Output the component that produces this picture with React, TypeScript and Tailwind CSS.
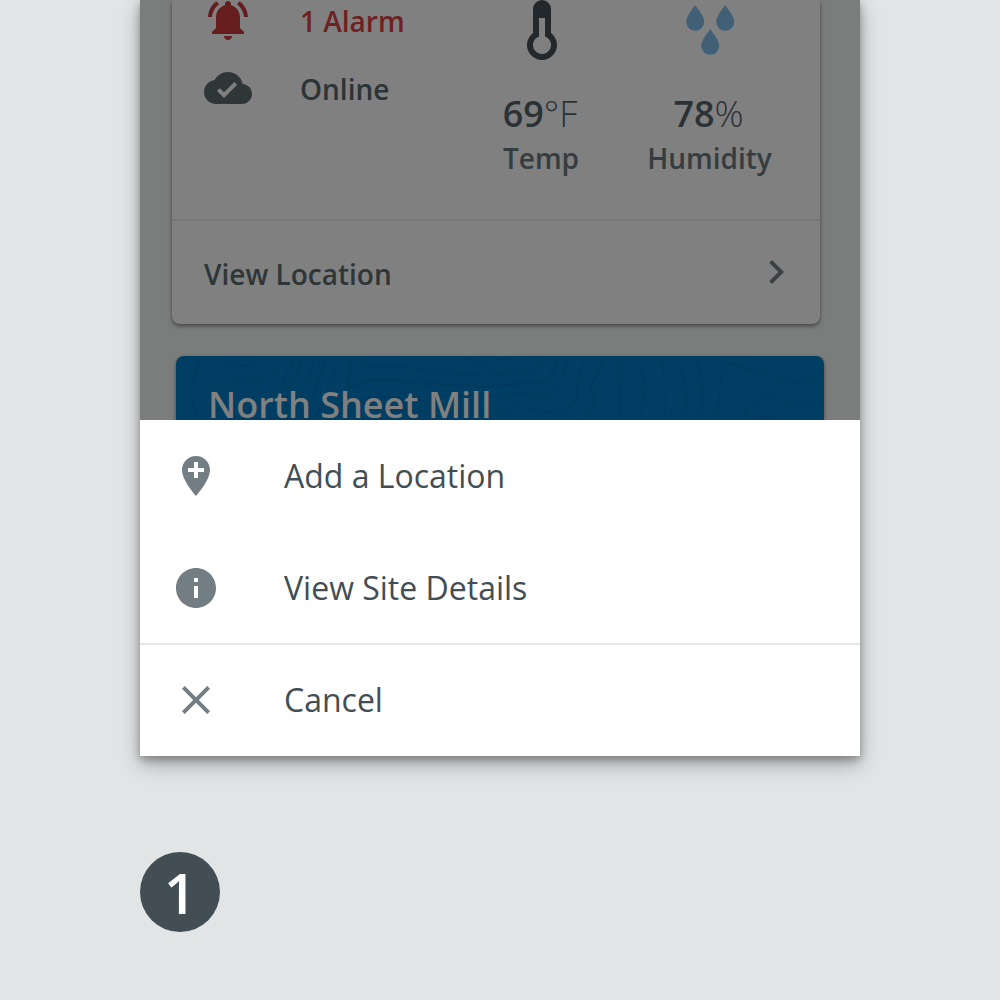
import type { ReactNode } from "react";

function Icon({ d, className }: { d: string; className: string }) {
  return (
    <svg viewBox="0 0 24 24" className={`size-12 shrink-0 ${className}`} fill="currentColor">
      <path d={d} />
    </svg>
  );
}

const PATHS = {
  alarm:
    "M7.58 4.08L6.15 2.65C3.75 4.48 2.17 7.3 2.03 10.5h2c.15-2.65 1.51-4.97 3.55-6.42zm12.39 6.42h2c-.15-3.2-1.73-6.02-4.12-7.85l-1.42 1.43c2.02 1.45 3.39 3.77 3.54 6.42zM18 11c0-3.07-1.64-5.64-4.5-6.32V4c0-.83-.67-1.5-1.5-1.5s-1.5.67-1.5 1.5v.68C7.63 5.36 6 7.92 6 11v5l-2 2v1h16v-1l-2-2v-5zm-6 11c.14 0 .27-.01.4-.04.65-.14 1.18-.58 1.44-1.18.1-.24.15-.5.15-.78h-4c.01 1.1.9 2 2.01 2z",
  cloud:
    "M19.35 10.04C18.67 6.59 15.64 4 12 4 9.11 4 6.6 5.64 5.35 8.04 2.34 8.36 0 10.91 0 14c0 3.31 2.69 6 6 6h13c2.76 0 5-2.24 5-5 0-2.64-2.05-4.78-4.65-4.96zM10 17l-3.5-3.5 1.41-1.41L10 14.17 15.18 9l1.41 1.41L10 17z",
  chevron: "M10 6L8.59 7.41 13.17 12l-4.58 4.59L10 18l6-6z",
  pin: "M12 2C8.14 2 5 5.14 5 9c0 5.25 7 13 7 13s7-7.75 7-13c0-3.86-3.14-7-7-7zm4 8h-3v3h-2v-3H8V8h3V5h2v3h3v2z",
  info: "M12 2C6.48 2 2 6.48 2 12s4.48 10 10 10 10-4.48 10-10S17.52 2 12 2zm1 15h-2v-6h2v6zm0-8h-2V7h2v2z",
  close:
    "M19 6.41L17.59 5 12 10.59 6.41 5 5 6.41 10.59 12 5 17.59 6.41 19 12 13.41 17.59 19 19 17.59 13.41 12z",
};

function Thermometer() {
  return (
    <svg viewBox="0 0 30 60" className="h-[60px] w-[30px]" fill="#22282b">
      <path
        fillRule="evenodd"
        d="M15 0a9 9 0 0 1 9 9v24a15 15 0 1 1-18 0V9a9 9 0 0 1 9-9zM12 18v18.500a9 9 0 1 0 6 0V18z"
      />
    </svg>
  );
}

function Drops() {
  const drop = "M9 0C9 0 0 10.500 0 16.500a9 9 0 0 0 18 0C18 10.500 9 0 9 0z";
  return (
    <svg viewBox="0 0 49 50" className="h-[50px] w-[49px]" fill="#416075">
      <path d={drop} transform="translate(0.200 0.300)" />
      <path d={drop} transform="translate(30.200 0.300)" />
      <path d={drop} transform="translate(15.200 24.300)" />
    </svg>
  );
}

function Metric({ icon, value, unit, label }: { icon: ReactNode; value: string; unit: string; label: string }) {
  return (
    <div className="flex flex-col items-center whitespace-nowrap">
      <div className="ml-0.5 flex h-[60px] items-center">{icon}</div>
      <div className="mt-[29px] mr-0.5 text-[36px] leading-[50px] font-semibold text-[#2b3235]">
        {value}
        <span className="font-light">{unit}</span>
      </div>
      <div className="-mt-px text-[28px] leading-[40px] font-semibold text-[#363d40]">{label}</div>
    </div>
  );
}

function Contours() {
  return (
    <svg viewBox="0 0 648 64" className="absolute inset-0 h-16 w-[648px]" fill="none" stroke="#00395e" strokeWidth="3.500">
      <g transform="translate(-46 -16) scale(.33333)">
        <path d="M212 48C205 95 178 130 186 180Q190 210 205 240" />
        <path d="M272 48Q275 75 310 74C360 80 385 70 400 48" />
        <path d="M462 48C440 100 410 118 350 122S300 140 295 165" />
        <path d="M492 48C480 100 450 120 455 160S425 210 415 240M518 48Q510 85 490 120Q465 150 470 240" strokeWidth="4.500" />
        <path d="M552 48C550 100 520 125 515 170S480 210 475 240M585 48C590 90 560 115 555 150S520 205 515 240M618 48C625 90 595 120 590 160S560 205 555 240" />
        <path d="M660 48C665 90 650 120 655 138Q675 145 700 128C760 100 820 135 900 132S1010 145 1080 140" strokeWidth="5.500" />
        <path d="M700 48Q690 75 700 80C760 85 820 75 900 90S1010 108 1080 108M1000 50Q1040 66 1080 60" />
        <path d="M650 240C655 200 690 175 740 170S850 190 900 178S1010 160 1080 170M720 240C750 205 810 215 870 214S1000 222 1080 220" />
      </g>
      <g transform="translate(314 -16) scale(.33333)">
        <path d="M0 60Q45 60 75 48M0 108C60 95 140 110 173 48M0 170Q50 160 110 163H190Q200 160 203 140C210 110 230 85 240 48M0 220C40 205 80 195 120 206S250 225 260 170C258 120 275 95 288 48" />
        <path d="M0 138Q60 130 140 131C185 130 190 85 205 48M340 48C335 85 330 100 312 120C292 145 315 160 314 190Q310 215 280 240" strokeWidth="5.500" />
        <path d="M388 48Q385 130 392 240M447 48C450 95 468 110 466 155S450 195 447 240M513 48C528 100 520 150 524 240M565 48C575 100 595 150 588 200Q585 220 580 240M617 48C630 100 650 170 633 240" />
        <path d="M680 240C690 190 690 140 695 90Q700 65 735 73C780 90 800 97 820 97C860 115 880 130 920 128S970 105 1002 96" />
        <path d="M757 240C770 195 795 190 815 172Q830 165 860 178C900 195 950 205 1002 187" />
        <path d="M802 240Q828 215 862 240" strokeWidth="5.500" />
      </g>
    </svg>
  );
}

function SheetRow({ icon, label, className = "" }: { icon: string; label: string; className?: string }) {
  return (
    <div className={`flex h-28 items-center pl-8 ${className}`}>
      <Icon d={icon} className="text-[#727e84]" />
      <span className="ml-16 text-[32px] leading-[48px] text-[#424e54]">{label}</span>
    </div>
  );
}

export default function App() {
  return (
    <div className="h-[1000px] w-[1000px] overflow-hidden bg-[#e1e5e5] pl-[140px] font-['Open_Sans',sans-serif]">
      <div className="h-[756px] w-[720px] bg-white shadow-[0_8px_20px_rgba(0,0,0,0.28),0_4px_8px_rgba(0,0,0,0.28)]">
        <div className="h-[420px] overflow-hidden bg-[#7b7d7c]">
          <div className="ml-8 h-[324px] w-[648px] rounded-b-lg bg-[#808080] shadow-[0_2px_4px_rgba(0,0,0,0.45)]">
            <div className="flex h-[219px]">
              <div className="w-[306px] shrink-0 pl-8">
                <div className="-mt-1 flex h-[52px] items-start">
                  <Icon d={PATHS.alarm} className="text-[#651d1e]" />
                  <span className="ml-12 text-[28px] leading-[50px] font-semibold text-[#6e2022]">1 Alarm</span>
                </div>
                <div className="mt-4 flex h-12 items-center">
                  <Icon d={PATHS.cloud} className="text-[#2f3638]" />
                  <span className="mt-0.5 ml-12 text-[28px] leading-[52px] font-semibold text-[#2c3437]">Online</span>
                </div>
              </div>
              <div className="grid grid-cols-[126px_211px]">
                <Metric icon={<Thermometer />} value="69" unit="°F" label="Temp" />
                <Metric icon={<Drops />} value="78" unit="%" label="Humidity" />
              </div>
            </div>
            <div className="flex h-[105px] items-center justify-between border-t-2 border-[#757676] pr-5 pl-8">
              <span className="mt-0.5 text-[28px] leading-[40px] font-semibold text-[#2f3638]">View Location</span>
              <Icon d={PATHS.chevron} className="mb-px text-[#394145]" />
            </div>
          </div>
          <div className="relative mt-8 ml-9 h-16 w-[648px] rounded-t-lg bg-[#003e63] pt-[34px] pl-8 shadow-[0_2px_4px_rgba(0,0,0,0.45)]">
            <Contours />
            <div className="relative text-[36px] leading-[30px] font-semibold text-[#808080]">North Sheet Mill</div>
          </div>
        </div>
        <SheetRow icon={PATHS.pin} label="Add a Location" />
        <SheetRow icon={PATHS.info} label="View Site Details" />
        <SheetRow icon={PATHS.close} label="Cancel" className="shadow-[inset_0_1px_0_#e5e6e7,0_-1px_0_#e5e6e7]" />
      </div>
      <div className="mt-24 flex size-20 items-center justify-center rounded-full bg-[#424e54] text-[56px] leading-[80px] font-semibold text-white">
        1
      </div>
    </div>
  );
}
